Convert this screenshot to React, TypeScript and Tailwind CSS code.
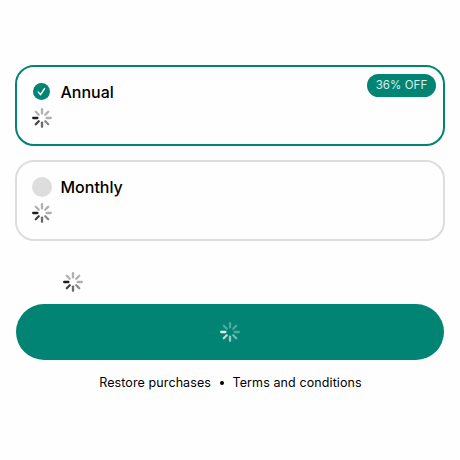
const SPOKES = [0.3, 0.3, 0.3, 0.45, 0.58, 0.73, 0.88, 0.3];

function Spinner({ light = false }: { light?: boolean }) {
  return (
    <svg viewBox="0 0 20 20" className={`block size-5 shrink-0 ${light ? "text-white" : "text-black"}`}>
      {SPOKES.map((opacity, i) => (
        <line
          key={i}
          x1="10"
          y1="1.2"
          x2="10"
          y2="5.4"
          stroke="currentColor"
          strokeWidth="2.3"
          strokeLinecap="round"
          opacity={opacity}
          transform={`rotate(${i * 45} 10 10)`}
        />
      ))}
    </svg>
  );
}

function Plan({ name, selected = false, badge }: { name: string; selected?: boolean; badge?: string }) {
  return (
    <section
      className={`relative flex h-[81px] flex-col gap-[6px] rounded-[19px] border-2 pl-[15px] pt-[15px] ${
        selected ? "border-[#028474]" : "border-[#dddddd]"
      }`}
    >
      <div className="flex h-5 items-center gap-[8.5px]">
        {selected ? (
          <svg viewBox="0 0 20 20" className="size-5">
            <circle cx="9.5" cy="9.5" r="8.5" fill="#028474" />
            <path d="M6.3 10.1 8.6 12.7 12.6 6.5" fill="none" stroke="white" strokeWidth="1.4" strokeLinecap="round" strokeLinejoin="round" />
          </svg>
        ) : (
          <span className="size-5 rounded-full bg-[#dddddd]" />
        )}
        <span className="text-[16px] leading-5 font-medium">{name}</span>
      </div>
      <Spinner />
      {badge && (
        <span className="absolute top-[7px] right-[7px] flex h-[23px] w-[69px] items-center justify-center rounded-full bg-[#028474] text-[11.5px] leading-[23px] tracking-[0.08px] text-[#d9efec]">
          {badge}
        </span>
      )}
    </section>
  );
}

export default function App() {
  return (
    <main className="h-[460px] w-[460px] bg-[#fefefe] px-[15px] pt-[65px] font-['Inter',sans-serif] text-black">
      <div className="flex flex-col gap-[14px]">
        <Plan name="Annual" selected badge="36% OFF" />
        <Plan name="Monthly" />
      </div>
      <div className="mt-[31px] pl-12">
        <Spinner />
      </div>
      <button className="mx-px mt-3 flex h-14 w-[428px] items-center justify-center rounded-full bg-[#028474]">
        <Spinner light />
      </button>
      <footer className="mt-[13px] flex items-center justify-center pl-px text-[12.5px] leading-5 tracking-[0.1px]">
        <span>Restore purchases</span>
        <span className="mr-[9px] ml-[8.5px] size-1 rounded-full bg-black" />
        <span>Terms and conditions</span>
      </footer>
    </main>
  );
}
